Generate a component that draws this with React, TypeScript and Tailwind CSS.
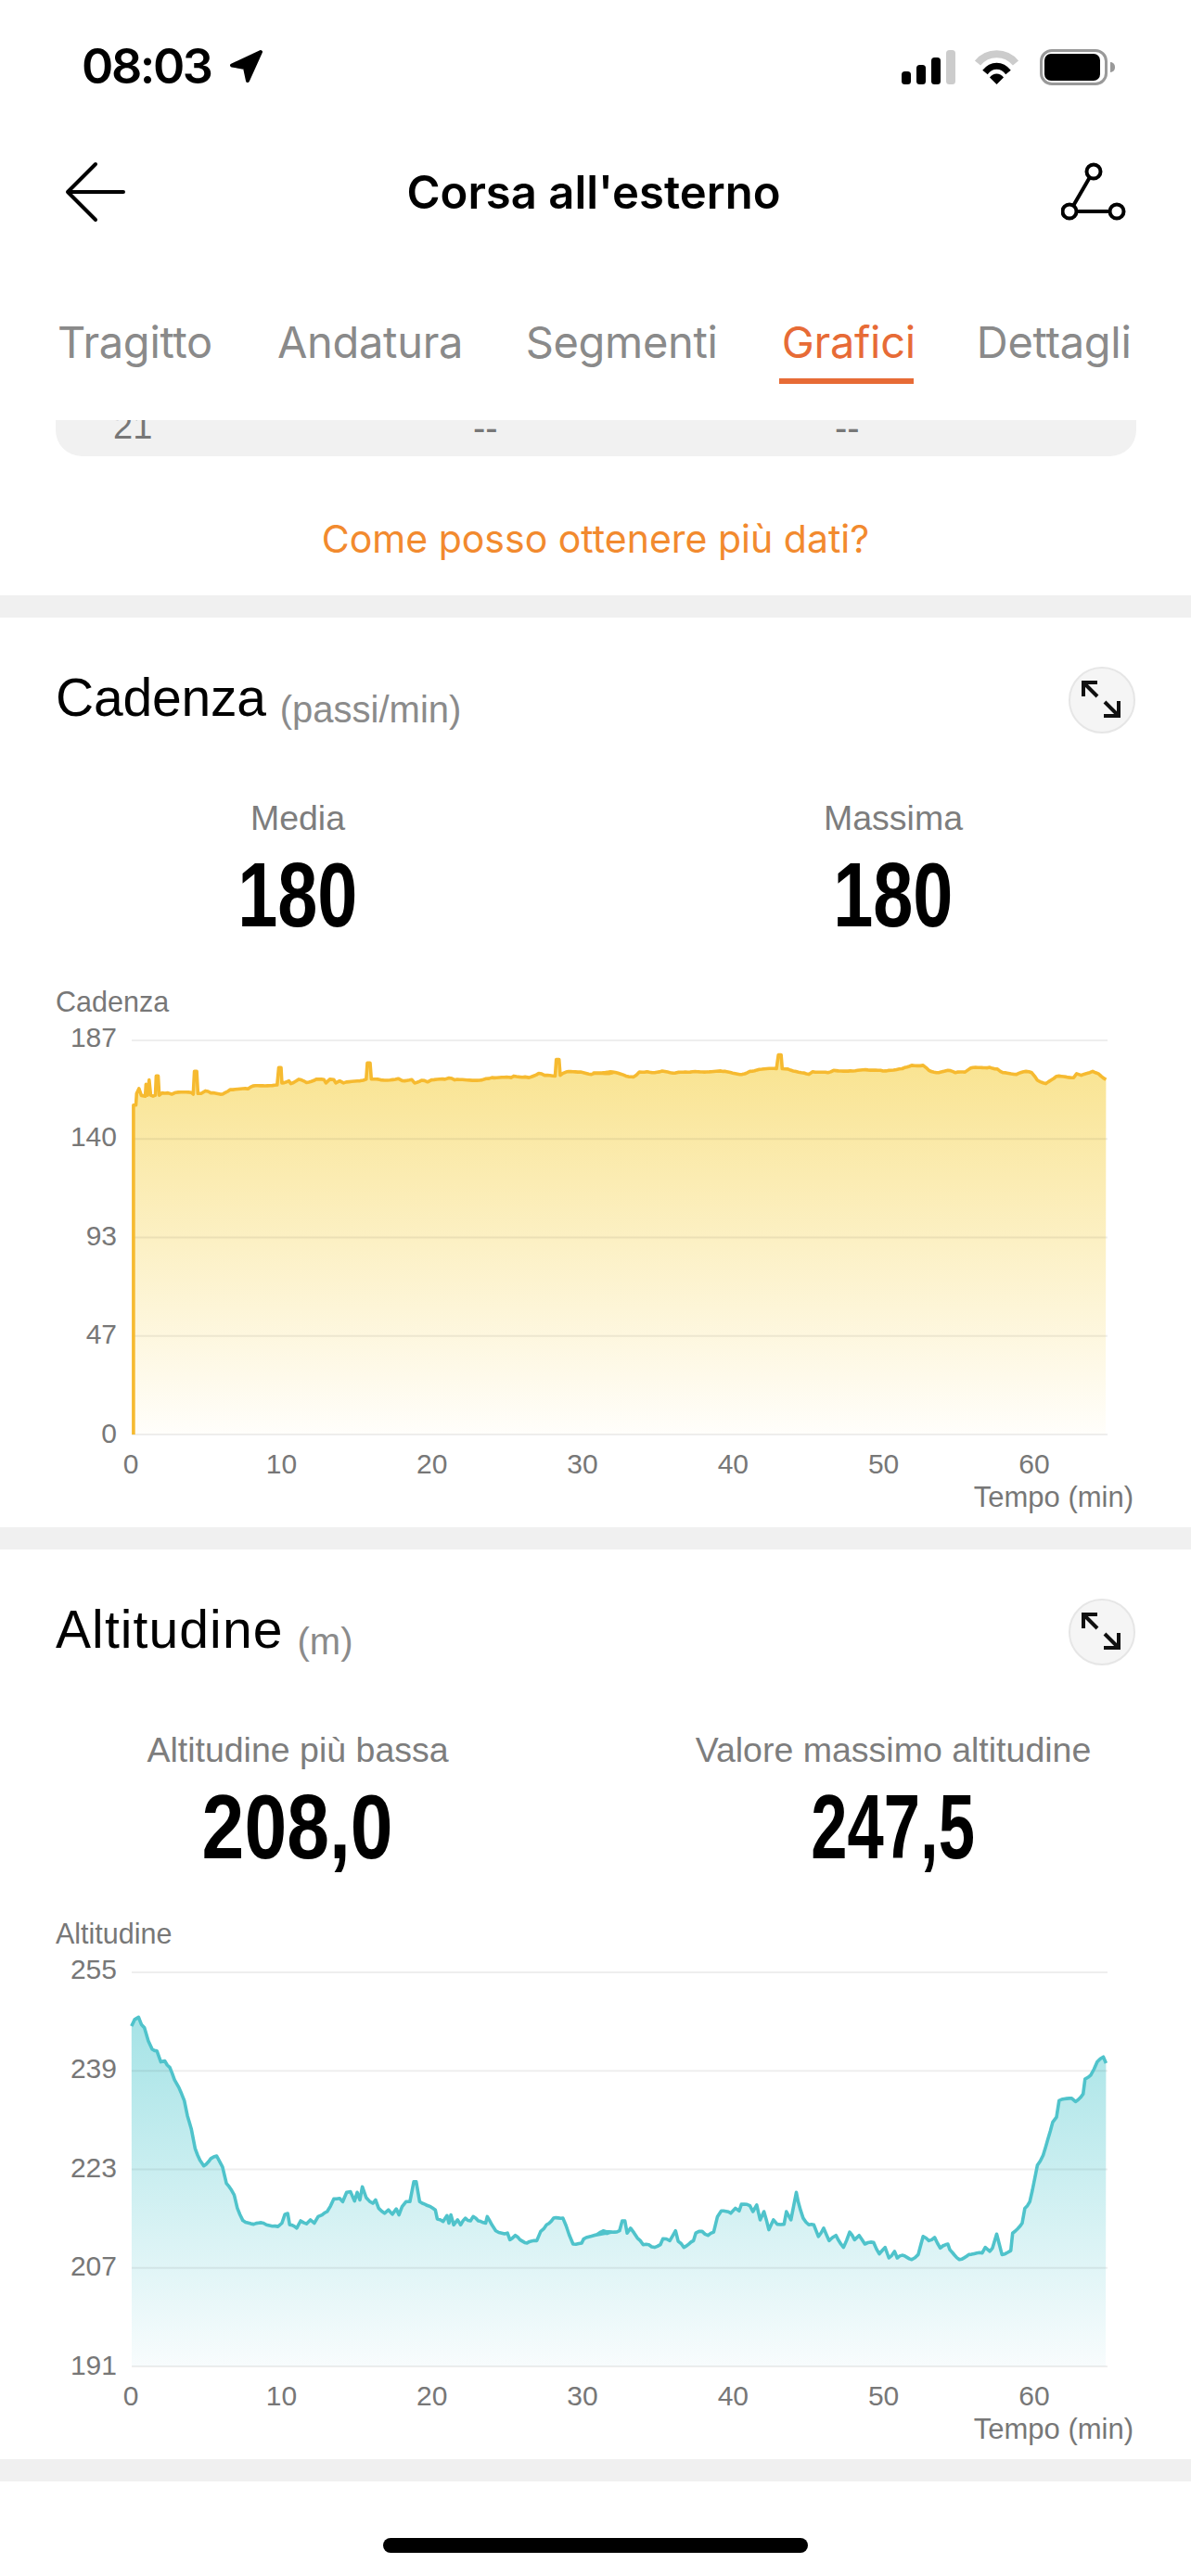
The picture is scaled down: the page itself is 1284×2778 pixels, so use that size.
const sans = "font-['Liberation_Sans',Arial,sans-serif]"
const ui = "font-['Inter',sans-serif]"

type Pt = number[]

// traced from the screenshot, left part and right part of each curve
const cadenceLeft: Pt[] = [[342,1420],[342,425],[348,425],[350,390],[356,375],[362,396],[372,398],[374,362],[378,395],[382,349],[386,395],[392,398],[398,395],[400,337],[405,337],[408,395],[415,388],[430,388],[440,392],[450,387],[490,387],[495,392],[498,323],[504,323],[507,390],[515,390],[526,382],[540,388],[570,392],[590,378],[635,376],[648,367],[710,364],[714,312],[720,312],[722,358],[740,352],[745,360],[765,347],[785,357],[810,347],[830,348],[835,358],[845,347],[855,348],[860,358],[870,352],[880,358],[915,352],[938,347],[941,298],[948,298],[951,346],[975,349],[985,350],[1020,345],[1030,351],[1055,348],[1062,358],[1080,350],[1095,355],[1105,349],[1140,347],[1150,343],[1165,349],[1235,349],[1245,345],[1260,342],[1310,342],[1316,337],[1345,340],[1355,342],[1380,329],[1395,335],[1422,337],[1425,287],[1432,287],[1435,335],[1450,325],[1480,325],[1515,332],[1525,328],[1568,328]]
const cadenceRight: Pt[] = [[0,328],[50,325],[85,337],[105,340],[120,325],[140,324],[160,327],[180,322],[215,328],[260,324],[340,323],[390,332],[410,323],[435,317],[480,315],[485,273],[492,273],[495,315],[510,316],[545,327],[565,332],[575,324],[615,327],[630,320],[680,322],[720,319],[760,322],[780,320],[810,315],[835,305],[865,305],[880,320],[900,327],[930,320],[950,327],[975,325],[990,313],[1040,311],[1060,316],[1075,327],[1110,332],[1135,323],[1150,327],[1165,350],[1187,360],[1215,338],[1260,342],[1268,330],[1280,335],[1310,323],[1325,330],[1345,348]]
const altLeft: Pt[] = [[337,350],[345,330],[355,323],[362,345],[370,355],[380,395],[390,420],[402,425],[412,458],[422,455],[435,475],[447,512],[458,535],[472,575],[480,620],[490,660],[500,720],[512,755],[522,772],[540,750],[555,742],[570,775],[580,825],[600,860],[608,900],[622,937],[650,948],[675,945],[690,952],[712,955],[722,945],[730,918],[737,916],[742,950],[760,960],[770,938],[785,947],[795,935],[805,945],[815,925],[825,920],[838,910],[855,872],[870,870],[878,880],[888,852],[898,850],[908,878],[915,852],[922,875],[928,835],[938,868],[955,885],[962,875],[970,900],[985,915],[995,905],[1005,918],[1015,902],[1022,920],[1030,895],[1040,880],[1050,880],[1060,820],[1066,820],[1075,880],[1095,892],[1115,905],[1120,932],[1135,940],[1145,922],[1150,945],[1155,920],[1162,950],[1172,935],[1180,950],[1192,930],[1205,938],[1212,925],[1225,938],[1244,945],[1248,925],[1260,950],[1270,968],[1285,975],[1300,975],[1306,995],[1320,982],[1332,995],[1350,1005],[1375,998],[1385,970],[1400,950],[1418,930],[1442,930],[1458,980],[1468,1008],[1490,1005],[1495,993],[1535,975],[1545,968],[1568,972]]
const altRight: Pt[] = [[0,982],[18,972],[35,976],[68,968],[75,938],[82,938],[88,975],[97,960],[115,990],[130,1010],[145,1010],[160,1018],[175,1010],[182,992],[200,998],[215,968],[222,1000],[237,1018],[262,998],[268,975],[285,970],[300,982],[315,972],[325,925],[335,908],[360,915],[372,900],[382,908],[388,888],[410,892],[418,910],[428,890],[437,935],[447,910],[460,965],[472,935],[482,948],[500,948],[506,910],[518,935],[532,852],[537,880],[550,930],[565,950],[578,950],[590,985],[604,960],[618,998],[636,982],[656,1018],[672,972],[685,995],[697,982],[712,1008],[735,1003],[750,1038],[765,1018],[775,1050],[790,1030],[797,1050],[810,1042],[835,1055],[852,1040],[865,985],[880,998],[895,988],[910,1020],[930,1008],[935,1025],[960,1055],[985,1040],[1020,1035],[1028,1018],[1040,1030],[1047,1020],[1058,978],[1072,1040],[1095,1028],[1100,975],[1125,945],[1132,900],[1145,880],[1165,770],[1180,740],[1205,640],[1215,625],[1222,575],[1255,568],[1265,578],[1285,555],[1290,510],[1305,498],[1322,458],[1338,443],[1345,462]]

// page coordinates, with the small sensor noise the real line has
function toPage(left: Pt[], right: Pt[], baseY: number, noise: number) {
  const a = left.map(([x, y]) => [x / 2.376, baseY + y / 2.8])
  const b = right.map(([x, y]) => [640 + x / 2.435, baseY + y / 2.8])
  const pts = [...a, ...b]
  const out: string[] = []
  pts.forEach((p, i) => {
    out.push(p[0].toFixed(1) + "," + p[1].toFixed(1))
    const next = pts[i + 1]
    if (!next) return
    const steps = Math.floor((next[0] - p[0]) / 2.5)
    for (let s = 1; s < steps; s++) {
      const t = s / steps
      const j = Math.sin((p[0] + s) * 12.9898) * noise
      out.push((p[0] + (next[0] - p[0]) * t).toFixed(1) + "," + (p[1] + (next[1] - p[1]) * t + j).toFixed(1))
    }
  })
  return out.join(" ")
}

function Plot({ id, points, top, line, from, to, first }: { id: string; points: string; top: number; line: string; from: string; to: string; first: number }) {
  const bottom = top + 425
  const fill = `${first},${bottom} ${points} 1192,${bottom}`
  return (
    <svg width="1052" height="426" viewBox={`142 ${top} 1052 426`} className="mt-[18px] block overflow-visible">
      <defs>
        <linearGradient id={id} x1="0" y1="0" x2="0" y2="1">
          <stop offset="0" stopColor={from} />
          <stop offset="1" stopColor={to} />
        </linearGradient>
      </defs>
      <polygon points={fill} fill={`url(#${id})`} />
      {[0, 1, 2, 3, 4].map((i) => (
        <line key={i} x1="142" x2="1194" y1={top + i * 106.25} y2={top + i * 106.25} stroke="#000" strokeOpacity="0.065" strokeWidth="2" />
      ))}
      <polyline points={points} fill="none" stroke={line} strokeWidth="3.6" strokeLinejoin="round" />
    </svg>
  )
}

function ExpandButton() {
  return (
    <div className="h-[72px] w-[72px] rounded-full border-2 border-[#e6e6e6] bg-[#f5f5f5]">
      <svg width="68" height="68" viewBox="2 2 68 68" fill="none" stroke="#111" strokeWidth="4">
        <path d="M31 17H16V32M16 17L31 32" />
        <path d="M38 53H54V37M54 53L39 38" />
      </svg>
    </div>
  )
}

type Stat = { label: string; value: string; squeeze: string }

function ChartSection({
  title, titleClass, unit, left, right, yLabels, axisName, children,
}: {
  title: string; titleClass: string; unit: string
  left: Stat
  right: Stat
  yLabels: string[]; axisName: string; children: React.ReactNode
}) {
  const stats = [left, right]
  return (
    <section className={`bg-white pt-[53px] pb-[16px] ${sans}`}>
      <div className="flex h-[72px] items-center justify-between pl-[60px] pr-[60px]">
        <div className="flex items-baseline gap-[15px] pb-[5px] text-black">
          <span className={`text-[57px] leading-none ${titleClass}`}>{title}</span>
          <span className="translate-y-[7px] text-[40px] leading-none text-[#8b8b8b]">{unit}</span>
        </div>
        <ExpandButton />
      </div>

      <div className="mt-[68px] grid grid-cols-2">
        {stats.map((s) => (
          <div key={s.label} className="flex flex-col items-center">
            <div className="h-[46px] text-[37.5px] leading-[46px] text-[#7d7d7d]">{s.label}</div>
            <div className={`mt-[18px] h-[84px] text-[98px] font-bold leading-[84px] text-black ${s.squeeze}`}>{s.value}</div>
          </div>
        ))}
      </div>

      <div className="mt-[58px] h-[30px] pl-[60px] text-[30.5px] leading-[30px] text-[#777]">{axisName}</div>
      <div className="mt-[9px] flex items-start pl-[60px]">
        <div className="flex h-[457px] w-[66px] flex-col justify-between text-right text-[30px] leading-[30px] text-[#777]">
          {yLabels.map((l) => (
            <div key={l}>{l}</div>
          ))}
        </div>
        <div className="ml-[16px]">{children}</div>
      </div>
      <div className="flex h-[36px] pl-[60px] text-[30px] leading-[36px] text-[#777]">
        {["0", "10", "20", "30", "40", "50", "60"].map((t) => (
          <div key={t} className="w-[162.3px] text-center">{t}</div>
        ))}
      </div>
      <div className="mt-[2px] h-[32px] pr-[62px] text-right text-[31px] leading-[32px] text-[#777]">Tempo (min)</div>
    </section>
  )
}

export default function App() {
  return (
    <div className="h-[2778px] w-[1284px] overflow-hidden bg-white">
      {/* status bar */}
      <div className="flex h-[144px] items-center justify-between pl-[88px] pr-[82px]">
        <div className="flex items-center gap-[18px]">
          <span className={`text-[52px] font-semibold leading-none tracking-[-2.4px] text-black ${ui}`}>08:03</span>
          <svg width="38" height="38" viewBox="0 0 38 38">
            <path d="M35 3L4 17.5L18 20L21 34Z" fill="#000" stroke="#000" strokeWidth="4" strokeLinejoin="round" />
          </svg>
        </div>
        <div className="flex items-center">
          <svg width="58" height="37" viewBox="0 0 58 37">
            <rect x="0" y="23" width="10" height="14" rx="3.5" fill="#000" />
            <rect x="16" y="16" width="10" height="21" rx="3.5" fill="#000" />
            <rect x="32" y="8" width="10" height="29" rx="3.5" fill="#000" />
            <rect x="48" y="0" width="10" height="37" rx="3.5" fill="#ccc" />
          </svg>
          <svg width="50" height="37" viewBox="0 0 50 37" fill="none" className="ml-[20px]">
            <path d="M4 14C15 1 34 1 45 14" stroke="#ccc" strokeWidth="8" />
            <path d="M12 24C19 15 30 15 37 24" stroke="#000" strokeWidth="7" />
            <path d="M24.5 37L17 29.5C21 24 28 24 32 29.5Z" fill="#000" />
          </svg>
          <div className="ml-[21px] flex items-center">
            <div className="h-[39px] w-[73px] rounded-[13px] border-[3px] border-[#999] p-[2px]">
              <div className="h-full w-[60px] rounded-[7px] bg-black" />
            </div>
            <div className="ml-[3px] h-[11px] w-[5px] rounded-r-full bg-[#999]" />
          </div>
        </div>
      </div>

      {/* nav */}
      <div className="flex h-[126px] items-center justify-between pl-[70px] pr-[68px]">
        <svg width="66" height="66" viewBox="0 0 66 66" fill="none" stroke="#000" strokeWidth="4" strokeLinecap="round" strokeLinejoin="round">
          <path d="M33 3L3 33L33 63M3 33H63" />
        </svg>
        <span className={`text-[49px] font-semibold leading-none text-black ${ui}`}>Corsa all'esterno</span>
        <svg width="72" height="66" viewBox="0 0 72 66" fill="none" stroke="#000" strokeWidth="4">
          <circle cx="35" cy="11" r="7.5" />
          <circle cx="9" cy="54" r="7.5" />
          <circle cx="60" cy="54" r="7.5" />
          <path d="M13 48L31 17M17 54H52" />
        </svg>
      </div>

      {/* tabs */}
      <div className={`flex h-[144px] items-start pl-[62px] pt-[70px] text-[47px] leading-[58px] tracking-[-0.3px] text-[#8a8a8a] ${ui}`}>
        <span>Tragitto</span>
        <span className="ml-[70px]">Andatura</span>
        <span className="ml-[67.5px]">Segmenti</span>
        <span className="relative ml-[69px] text-[#e76b36]">
          Grafici
          <span className="absolute -left-[3px] right-[2px] top-[68px] h-[6px] bg-[#e76b36]" />
        </span>
        <span className="ml-[66px]">Dettagli</span>
      </div>

      {/* end of the table above, scrolled under the tabs */}
      <div className="h-[39px]" />
      <div className="mx-[60px] flex h-[39px] w-[1165px] overflow-hidden rounded-b-[28px] bg-[#f1f1f1] pl-[62px] text-[40px] leading-[40px] text-[#777] font-['Liberation_Sans',sans-serif]">
        <div className="-mt-[13px] w-[388px] text-[38px]">21</div>
        <div className="-mt-[12px] w-[390px]">--</div>
        <div className="-mt-[12px]">--</div>
      </div>
      <div className={`flex h-[150px] items-center justify-center pt-[28px] text-[41px] leading-none text-[#f28a2e] ${ui}`}>
        Come posso ottenere più dati?
      </div>

      <div className="h-[24px] bg-[#f0f0f0]" />
      <ChartSection
        title="Cadenza"
        titleClass="tracking-[-0.2px]"
        unit="(passi/min)"
        left={{ label: "Media", value: "180", squeeze: "scale-x-[0.79]" }}
        right={{ label: "Massima", value: "180", squeeze: "scale-x-[0.79]" }}
        yLabels={["187", "140", "93", "47", "0"]}
        axisName="Cadenza"
      >
        <Plot id="cadence" points={toPage(cadenceLeft, cadenceRight, 1040, 0.5)} top={1122} line="#f6ba30" from="#f9e38f" to="#fffefb" first={144} />
      </ChartSection>

      <div className="h-[24px] bg-[#f0f0f0]" />
      <ChartSection
        title="Altitudine"
        titleClass="tracking-[1.1px]"
        unit="(m)"
        left={{ label: "Altitudine più bassa", value: "208,0", squeeze: "scale-x-[0.84]" }}
        right={{ label: "Valore massimo altitudine", value: "247,5", squeeze: "scale-x-[0.72]" }}
        yLabels={["255", "239", "223", "207", "191"]}
        axisName="Altitudine"
      >
        <Plot id="altitude" points={toPage(altLeft, altRight, 2060, 0.9)} top={2127} line="#4fc3cb" from="#a5e3e6" to="#f8fcfd" first={142} />
      </ChartSection>

      <div className="h-[24px] bg-[#f0f0f0]" />
      <div className="flex justify-center pt-[61px]">
        <div className="h-[16px] w-[458px] rounded-full bg-black" />
      </div>
    </div>
  )
}
